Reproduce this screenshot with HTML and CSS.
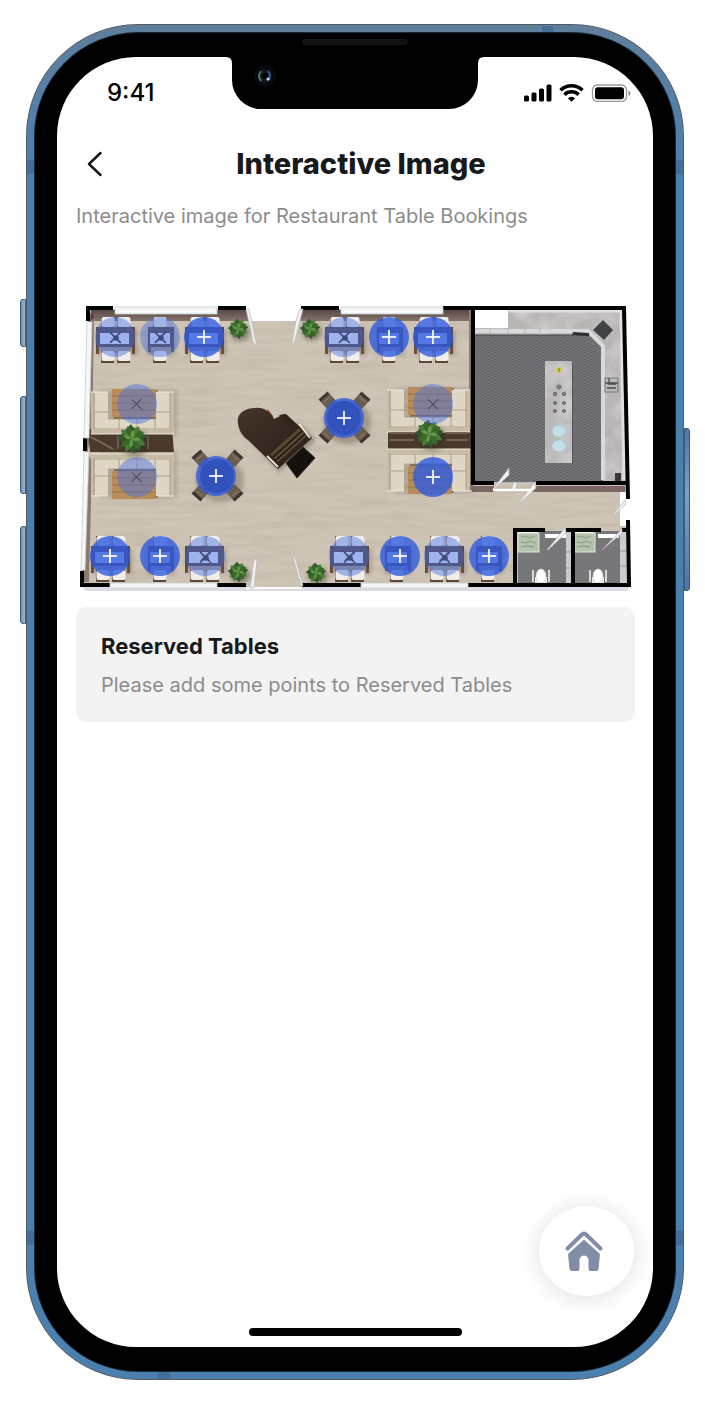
FILE: index.html
```html
<!DOCTYPE html>
<html lang="en">
<head>
<meta charset="utf-8">
<meta name="viewport" content="width=device-width, initial-scale=1">
<title>Interactive Image</title>
<link rel="stylesheet" href="styles.css">
</head>
<body>
<div class="phone">
  <span class="key key-mute"></span>
  <span class="key key-up"></span>
  <span class="key key-down"></span>
  <span class="key key-power"></span>
  <span class="band band-lt"></span>
  <span class="band band-lb"></span>
  <span class="band band-rt"></span>
  <span class="band band-rb"></span>
  <span class="band band-top"></span>
  <span class="band band-bottom"></span>
  <div class="bezel">
    <span class="speaker"></span>
    <div class="screen">
      <svg class="notch" viewBox="0 0 258 52" aria-hidden="true">
        <path d="M0 0h258q-6 0-6 6v17a29 29 0 0 1-29 29H35A29 29 0 0 1 6 23V6q0-6-6-6z" fill="#000"/>
        <circle cx="39" cy="19" r="11" fill="#060a0c"/>
        <circle cx="39" cy="19" r="7" fill="#10191f"/>
        <path d="M35 14q-4 5 0 10" stroke="#46736c" stroke-width="2" fill="none"/>
        <circle cx="39" cy="19" r="3" fill="#000"/>
        <path d="M42 14q3 4 1 9" stroke="#2f56a8" stroke-width="2" fill="none"/>
        <circle cx="42" cy="22" r="1.6" fill="#bcd4f4"/>
      </svg>
      <div class="status">
        <time>9:41</time>
        <svg class="status-icons" viewBox="0 0 107 18" aria-hidden="true">
          <rect x="0" y="11.500" width="5" height="6" rx="1.500"/>
          <rect x="7.500" y="8.500" width="5" height="9" rx="1.500"/>
          <rect x="15" y="4.500" width="5" height="13" rx="1.500"/>
          <rect x="22.500" y="0.500" width="5" height="17" rx="1.500"/>
          <g fill="none" stroke="#000" stroke-width="3.500">
            <path d="M36.500 6.200a16 16 0 0 1 22 0"/>
            <path d="M40.400 10.700a10.300 10.300 0 0 1 14.200 0"/>
          </g>
          <path d="M47.500 17.800l-3.600-3.500a5 5 0 0 1 7.200 0z"/>
          <rect x="68.500" y="1" width="34" height="16.500" rx="5" fill="none" stroke="#000" stroke-opacity=".4" stroke-width="1.300"/>
          <rect x="71" y="3.300" width="29" height="12" rx="2.800"/>
          <path d="M104.500 6.500q2 .8 2 2.800t-2 2.800z" fill-opacity=".45"/>
        </svg>
      </div>

      <header class="titlebar">
        <button class="back" type="button" aria-label="Back">
          <svg viewBox="0 0 16 26" aria-hidden="true"><path d="M13.500 2L2 13l11.500 11"/></svg>
        </button>
        <h1>Interactive Image</h1>
      </header>

      <main>
        <p class="lead">Interactive image for Restaurant Table Bookings</p>

        <div class="plan">
          <svg class="plan-art" viewBox="76 300 559 295" role="img" aria-label="Restaurant floor plan">
            <defs>
              <filter id="grain" x="0" y="0" width="100%" height="100%">
                <feTurbulence type="fractalNoise" baseFrequency=".018 .14" numOctaves="3" seed="4"/>
                <feColorMatrix values="0 0 0 0 .48  0 0 0 0 .42  0 0 0 0 .34  .9 0 0 0 -.34"/>
              </filter>
              <filter id="marble" x="0" y="0" width="100%" height="100%">
                <feTurbulence type="fractalNoise" baseFrequency=".05" numOctaves="3" seed="9"/>
                <feColorMatrix values="0 0 0 0 1  0 0 0 0 1  0 0 0 0 1  1.600 0 0 0 -.55"/>
              </filter>
              <filter id="soft" x="-20%" y="-20%" width="140%" height="140%"><feGaussianBlur stdDeviation="2"/></filter>
              <linearGradient id="wall" x1="0" y1="0" x2="0" y2="1">
                <stop offset="0" stop-color="#5b4847"/><stop offset="1" stop-color="#85746a"/>
              </linearGradient>
              <linearGradient id="lid" x1="0" y1="0" x2="1" y2="1">
                <stop offset="0" stop-color="#45342a"/><stop offset="1" stop-color="#281c16"/>
              </linearGradient>
              <pattern id="tiles" width="6" height="6" patternUnits="userSpaceOnUse">
                <rect width="6" height="6" fill="#67686a"/>
                <path d="M0 3l3-3 3 3M0 6l3-3 3 3" stroke="#7d7e81" stroke-width=".8" fill="none"/>
              </pattern>
              <clipPath id="floorclip"><path d="M88 309H246L251 321H299L302 309H625L629 587H81z"/></clipPath>

              <g id="chair">
                <path d="M-7-6h13v12h-13z" fill="#6a5141"/>
                <rect x="-6.500" y="-6" width="13" height="10" rx="2" fill="#f1edea"/>
                <path d="M-6 5h12" stroke="#5b4334" stroke-width="1.500"/>
              </g>
              <g id="table2">
                <rect x="-17" y="-7" width="39" height="25" fill="#4b382d" opacity=".3" filter="url(#soft)"/>
                <use href="#chair" x="-7" y="-14"/><use href="#chair" x="9" y="-14"/>
                <use href="#chair" x="-7" y="20"/><use href="#chair" x="9" y="20"/>
                <path d="M-19-9h39v26h-3V9h-33v8h-3z" fill="#6b4e3b"/>
                <rect x="-19" y="-10" width="39" height="20" fill="#594441"/>
                <rect x="-15" y="-4" width="29" height="11" fill="#e9edf8"/>
              </g>
              <g id="table1">
                <rect x="-12" y="-7" width="27" height="25" fill="#4b382d" opacity=".3" filter="url(#soft)"/>
                <use href="#chair" y="-14"/><use href="#chair" y="20"/>
                <path d="M-12-9h26v24h-3V9h-20v6h-3z" fill="#6b4e3b"/>
                <rect x="-12" y="-10" width="26" height="20" fill="#594441"/>
                <rect x="-10" y="-4" width="20" height="11" fill="#dfe5f5"/>
              </g>
              <g id="flowers">
                <path d="M-5-5L6 6M6-5L-5 6" stroke="#2b2632" stroke-width="1.300"/>
                <circle cx="1" cy="1" r="2.800" fill="#293344"/>
                <path d="M-4-4l2 3M4-4l-2 3" stroke="#9a4056" stroke-width="1.200"/>
              </g>
              <g id="seat">
                <rect x="-6" y="-6" width="12" height="12" rx="2" fill="#6a5c50"/>
                <path d="M-6-6h12" stroke="#40352d" stroke-width="3"/>
                <path d="M-4-2h8" stroke="#8b7d6f"/>
              </g>
              <g id="round">
                <ellipse cx="3" cy="4" rx="24" ry="22" fill="#4a3b2e" opacity=".3" filter="url(#soft)"/>
                <use href="#seat" transform="translate(-16 -17) rotate(-42)"/>
                <use href="#seat" transform="translate(17 -17) rotate(42)"/>
                <use href="#seat" transform="translate(-16 16) rotate(222)"/>
                <use href="#seat" transform="translate(17 16) rotate(138)"/>
                <circle r="17" fill="#3c3034"/>
              </g>
              <g id="booth">
                <rect x="-38" y="-18" width="78" height="46" fill="#4b3a2b" opacity=".2" filter="url(#soft)"/>
                <rect x="-23" y="-18" width="44" height="30" fill="#4d3523" opacity=".55"/>
                <rect x="-25" y="-19" width="44" height="28" fill="#b98d59"/>
                <path d="M-25-12h44M-25-5h44M-25 2h44" stroke="#9b7142" stroke-width="1"/>
                <path d="M-46-16h17v27h48v-27h18v42h-83z" fill="#dfd6c5"/>
                <path d="M-46-16h4v38h75v-38h4v42h-83z" fill="#c8bca7"/>
                <path d="M-43-15v36h76v-36M-28 11h47M-18 11v10M0 11v10M18 11v10M-42 4h14M19 4h14" fill="none" stroke="#a1947f" stroke-width=".8"/>
                <path d="M-46-16h17M20-16h17M-46 26h83" stroke="#f0e9dc" stroke-width="1.200"/>
              </g>
              <g id="leafs">
                <path d="M0 0C-4-5-5-9-1-12 3-8 3-4 0 0zM0 0C5-5 9-5 12-2 8 2 4 2 0 0zM0 0C-5-4-9-4-12-1-8 3-4 2 0 0zM0 0C-3 5-2 9 2 12 4 7 3 3 0 0z"/>
              </g>
              <g id="plant">
                <ellipse cx="2" cy="3" rx="10" ry="9" fill="#2d2c1d" opacity=".4" filter="url(#soft)"/>
                <circle r="8" fill="#335526"/>
                <use href="#leafs" fill="#31592a" transform="scale(.85)"/>
                <use href="#leafs" fill="#477b35" transform="rotate(35) scale(.82)"/>
                <use href="#leafs" fill="#396829" transform="rotate(65) scale(.78)"/>
                <use href="#leafs" fill="#67994b" transform="rotate(15) scale(.5)"/>
              </g>
              <g id="toilet">
                <path d="M-8-3v12M8-3v12" stroke="#f3f3f5" stroke-width="1.600"/>
                <rect x="-6" y="4" width="12" height="8" fill="#e8e8ec"/>
                <ellipse cy="3" rx="5" ry="7" fill="#fff" stroke="#c8c9cd" stroke-width=".6"/>
              </g>
              <g id="shower">
                <rect width="21" height="19" fill="#b5c2ad" stroke="#dfe5da"/>
                <path d="M3 4l4-1 4 2 6-2M3 9l5 1 4-2 6 2M3 14l6-1 8 1" stroke="#879b7f" fill="none"/>
                <path d="M0-1h20" stroke="#eff2ee" stroke-width="2"/>
              </g>
            </defs>

            <path d="M80 584H630L627 591H86z" fill="#dcdce6"/>
            <g clip-path="url(#floorclip)">
              <rect x="78" y="305" width="554" height="284" fill="#cfc5b6"/>
              <rect x="78" y="305" width="554" height="284" filter="url(#grain)"/>
              <path d="M91 310H246L251 321H92zM302 310H472V321H299z" fill="url(#wall)"/>
              <path d="M89 310l5 10-2 118-4 10v4l4 10-3 120h-8z" fill="#897a71"/>
              <path d="M469 310h4v180h-4z" fill="#8a7b70"/>
            </g>

            <!-- lounge dividers and booths -->
            <path d="M88 429H172L174 452H90z" fill="#4b3a2d"/>
            <use href="#booth" x="137" y="408"/>
            <use href="#booth" transform="translate(137 480) scale(1 -1)"/>
            <path d="M388 429H471V449H388z" fill="#4b3a2d"/>
            <use href="#booth" x="433" y="406"/>
            <use href="#booth" transform="translate(433 475) scale(1 -1)"/>
            <path d="M91 436h23v14H92zM150 436h21v14h-21zM390 432h24v15h-24zM446 432h22v15h-22z" fill="#4b3a2c"/>
            <path d="M91 437l22 12M118 436v13M148 436v13M390 440h24M446 440h22M390 433h24M446 433h22" stroke="#80705e" stroke-width="1.500"/>
            <use href="#plant" transform="translate(132 439) scale(1.450)"/>
            <use href="#plant" transform="translate(429 434) scale(1.400)"/>

            <!-- dining tables -->
            <use href="#table2" x="115" y="337"/><use href="#table1" x="160" y="337"/><use href="#table2" x="204" y="337"/>
            <use href="#table2" x="344" y="337"/><use href="#table1" x="389" y="337"/><use href="#table2" x="433" y="337"/>
            <use href="#table2" x="110" y="556"/><use href="#table1" x="160" y="556"/><use href="#table2" x="204" y="556"/>
            <use href="#table2" x="349" y="556"/><use href="#table1" x="397" y="556"/><use href="#table2" x="444" y="556"/><use href="#table1" x="488" y="556"/>
            <use href="#flowers" x="115" y="337"/><use href="#flowers" x="160" y="337"/><use href="#flowers" x="344" y="337"/>
            <use href="#flowers" x="205" y="557"/><use href="#flowers" x="349" y="557"/><use href="#flowers" x="444" y="557"/>
            <use href="#round" x="344" y="418"/><use href="#round" x="217" y="476"/>

            <!-- grand piano -->
            <path d="M241 430L279 472 316 440 300 424z" fill="#3a2c20" opacity=".35" filter="url(#soft)"/>
            <path d="M267 409q8 7 6 11h14l7 4-5 5-22-6z" fill="#a04524"/>
            <path d="M238 424c-2-9 5-16 17-16 9-1 15 4 19 11l10-5 28 24-35 30-29-28c-6-4-9-10-10-16z" fill="url(#lid)"/>
            <path d="M279 415l7-1 26 24-34 31-13-13 28-26z" fill="#31251d"/>
            <path d="M270 454l29-26 8 8-29 26z" fill="#594733"/>
            <path d="M273 457l29-26M276 460l29-26" stroke="#1b1511" stroke-width="1.500"/>
            <path d="M267 456l11 11M299 424l11 14" stroke="#efe6d5" stroke-width="1.800"/>
            <path d="M286 463l17-16 12 11-18 20z" fill="#15110f" stroke="#302720"/>

            <!-- kitchen -->
            <path d="M474 309H623L627 483H474z" fill="#b9b5b4"/>
            <path d="M474 309H623L627 483H474z" filter="url(#marble)" opacity=".4"/>
            <path d="M474 335H591L602 347V482H474z" fill="url(#tiles)"/>
            <path d="M474 335h117l11 12v135" fill="none" stroke="#454548" stroke-width="1"/>
            <path d="M474 331H588L603 346V480" fill="none" stroke="#d9d8dc" stroke-width="4"/>
            <path d="M509 311H621L624 480" fill="none" stroke="#e3dfe1" stroke-width="3"/>
            <rect x="474" y="310" width="34" height="18" fill="#fff"/>
            <path d="M490 328v7M508 328v7M525 328v7M540 328v7" stroke="#aaa" stroke-width=".7"/>
            <path d="M573 332l16 1v3l-17-1z" fill="#303033"/>
            <path d="M593 330l10-10 10 10-9 10z" fill="#414245"/>
            <rect x="605" y="378" width="13" height="14" fill="#b9b9bb" stroke="#77787c"/>
            <path d="M605 383h13M609 378v6h7M607 388h9" stroke="#4c4d51" stroke-width="1.300" fill="none"/>
            <rect x="615" y="473" width="6" height="8" fill="#38383b"/>
            <path d="M547 363h26v100h-26z" fill="#333" opacity=".45"/>
            <rect x="545" y="361" width="27" height="102" rx="1" fill="#bbb8b9"/>
            <rect x="545" y="361" width="27" height="102" filter="url(#marble)" opacity=".4"/>
            <circle cx="559" cy="370" r="3" fill="#d0cf43"/><path d="M559 368v4" stroke="#6e6b1d"/>
            <g fill="#918b88" stroke="#595452" stroke-width=".8">
              <circle cx="559" cy="387" r="2"/><circle cx="555" cy="394" r="1.700"/><circle cx="564" cy="394" r="1.700"/>
              <circle cx="555" cy="403" r="1.500"/><circle cx="564" cy="403" r="1.500"/><circle cx="555" cy="411" r="1.500"/><circle cx="564" cy="411" r="1.500"/>
            </g>
            <ellipse cx="559" cy="431" rx="7" ry="6" fill="#c0dfe6" stroke="#a2c3ca" stroke-width=".7"/>
            <ellipse cx="559" cy="446" rx="7" ry="6" fill="#c0dfe6" stroke="#a2c3ca" stroke-width=".7"/>
            <path d="M472 486H625V492H472z" fill="#7a6761"/>
            <path d="M494 486h41l-6 7h-35z" fill="#c7bcac"/>

            <!-- washrooms -->
            <path d="M518 531H628V584H518z" fill="#777779"/>
            <path d="M566 531h5v52h-5zM620 531h7v52h-7z" fill="#c9cbd0"/>
            <path d="M566 552h5M566 568h5M620 551h7M620 566h7" stroke="#999"/>
            <path d="M545 536h21M598 536h21" stroke="#fff" stroke-width="4"/>
            <use href="#shower" x="518" y="533"/><use href="#shower" x="574" y="533"/>
            <use href="#toilet" x="541" y="573"/><use href="#toilet" x="598" y="573"/>
            <path d="M620 492h8v34h-8z" fill="#fff"/>

            <!-- outer walls -->
            <g fill="none" stroke="#020202" stroke-width="4">
              <path d="M88 321V308H113M218 308H246M301 308H339M443 308H624L628 499"/>
              <path d="M473 308V483H494M536 483H627M85 438v13"/>
              <path d="M82 571V585H110M217 585H246M302 585H361M468 585H629L628 520M515 585V530H545M566 530H601M573 530V585M622 530h6"/>
            </g>
            <path d="M92 310L90 321 94 318z" fill="#4f403b"/>

            <!-- glazing -->
            <g fill="#f4f6f7" stroke="#c8ced0" stroke-width=".8">
              <path d="M115 307h102v7h-102zM341 307h102v7h-102z"/>
              <path d="M87 322h5l-3 116h-5zM84 452h5l-4 118h-4z"/>
              <path d="M110 583h107v5h-107zM361 583h107v5h-107z"/>
            </g>
            <path d="M118 311h96M344 311h96M246 588h56" stroke="#fff" stroke-width="2"/>

            <!-- doors -->
            <g fill="#f1f1f3" stroke="#b6b6ba" stroke-width=".7">
              <path d="M246 309h3l8 38-4-5z"/><path d="M296 320l4-11h3l-9 35-2-1z"/>
              <path d="M250 588l4-29h3l-3 29z"/><path d="M293 557h2l8 29h-2z"/>
              <path d="M493 489l16-21v7l-16 15z"/><path d="M511 491l3-9 3 1-2 8z"/>
              <path d="M518 504l17-22 1 6-18 17z"/>
              <path d="M609 520l16-20 1 4-17 16z"/>
              <path d="M547 550l18-22 1 5-18 17z"/><path d="M602 550l20-21v4l-20 17z"/>
            </g>
            <path d="M493 490h38" stroke="#fff" stroke-width="2.500"/>

            <use href="#plant" transform="translate(238 329)"/><use href="#plant" transform="translate(310 329)"/>
            <use href="#plant" transform="translate(238 572)"/><use href="#plant" transform="translate(316 573)"/>
          </svg>

          <button class="pin taken" type="button" aria-label="Table 1, reserved" style="--x:39;--y:37"></button>
          <button class="pin taken" type="button" aria-label="Table 2, reserved" style="--x:84;--y:37"></button>
          <button class="pin" type="button" aria-label="Add table 3" style="--x:128;--y:37"></button>
          <button class="pin taken" type="button" aria-label="Table 4, reserved" style="--x:268;--y:37"></button>
          <button class="pin" type="button" aria-label="Add table 5" style="--x:313;--y:37"></button>
          <button class="pin" type="button" aria-label="Add table 6" style="--x:357;--y:37"></button>
          <button class="pin taken" type="button" aria-label="Booth 7, reserved" style="--x:61;--y:104"></button>
          <button class="pin" type="button" aria-label="Add table 8" style="--x:268;--y:118"></button>
          <button class="pin taken" type="button" aria-label="Booth 9, reserved" style="--x:357;--y:104"></button>
          <button class="pin taken" type="button" aria-label="Booth 10, reserved" style="--x:61;--y:177"></button>
          <button class="pin" type="button" aria-label="Add table 11" style="--x:140;--y:176"></button>
          <button class="pin" type="button" aria-label="Add booth 12" style="--x:357;--y:177"></button>
          <button class="pin" type="button" aria-label="Add table 13" style="--x:34;--y:256"></button>
          <button class="pin" type="button" aria-label="Add table 14" style="--x:84;--y:256"></button>
          <button class="pin taken" type="button" aria-label="Table 15, reserved" style="--x:129;--y:256"></button>
          <button class="pin taken" type="button" aria-label="Table 16, reserved" style="--x:273;--y:256"></button>
          <button class="pin" type="button" aria-label="Add table 17" style="--x:324;--y:256"></button>
          <button class="pin taken" type="button" aria-label="Table 18, reserved" style="--x:368;--y:256"></button>
          <button class="pin" type="button" aria-label="Add table 19" style="--x:413;--y:256"></button>
        </div>

        <section class="card">
          <h2>Reserved Tables</h2>
          <p>Please add some points to Reserved Tables</p>
        </section>
      </main>

      <footer>
        <button class="home" type="button" aria-label="Home">
          <svg viewBox="0 0 40 42" aria-hidden="true">
            <path d="M3.500 18.500L18 4.500q2-1.800 4 0l14.500 14" fill="none" stroke="#818da6" stroke-width="4" stroke-linecap="round"/>
            <path d="M20 9.500L36 24l-1.500 15q-.2 2-2 2h-6q-2 0-2-2v-9q0-4-4.500-4.500-4.500.5-4.500 4.500v9q0 2-2 2H7.700q-2 0-2.200-2L4 24z" fill="#818da6"/>
          </svg>
        </button>
        <span class="indicator"></span>
      </footer>
    </div>
  </div>
</div>
</body>
</html>
```
FILE: styles.css
```css
* { box-sizing: border-box; }

body {
  margin: 0;
  padding: 24px 21px 30px 26px;
  background: #fff;
  color: #18191b;
  font-family: Inter, "Liberation Sans", sans-serif;
}

h1, h2, p { margin: 0; }

button {
  padding: 0;
  border: 0;
  background: none;
  font: inherit;
  cursor: pointer;
}

/* Device shell */
.phone {
  position: relative;
  display: flex;
  min-height: calc(100vh - 54px);
  padding: 8px;
  border: 1px solid #555a5e;
  border-radius: 112px;
  background: linear-gradient(#5f7f9b, #4b80ae 140px);
}

.bezel {
  position: relative;
  display: flex;
  flex: 1;
  min-width: 0;
  padding: 24px 22px;
  border-radius: 103px;
  background: #000;
  box-shadow: 0 0 0 1px #16283a;
}

.screen {
  position: relative;
  display: flex;
  flex: 1;
  flex-direction: column;
  min-width: 0;
  overflow: hidden;
  border-radius: 79px;
  background: #fff;
}

.key {
  position: absolute;
  left: -7px;
  width: 6px;
  border: 1px solid #3e5878;
  border-radius: 3px 0 0 3px;
  background: linear-gradient(90deg, #6f93b8, #9db9d6);
}

.key-mute { top: 274px; height: 48px; }
.key-up { top: 371px; height: 98px; }
.key-down { top: 501px; height: 98px; }

.key-power {
  top: 403px;
  right: -7px;
  left: auto;
  height: 163px;
  border-radius: 0 3px 3px 0;
  background: linear-gradient(#4f75a3, #7ba1cb 40%, #4f75a3);
}

.band { position: absolute; width: 8px; height: 14px; background: #426e99; }
.band-lt { top: 135px; left: 0; }
.band-rt { top: 135px; right: 0; }
.band-lb { bottom: 134px; left: 0; }
.band-rb { bottom: 134px; right: 0; }
.band-top { top: 1px; right: 130px; width: 11px; height: 7px; }
.band-bottom { bottom: 0; left: 131px; width: 12px; height: 7px; }

.speaker {
  position: absolute;
  top: 6px;
  left: 50%;
  width: 105px;
  height: 6px;
  border: 1px solid #181818;
  border-radius: 3px;
  background: #111;
  transform: translateX(-50%);
}

.notch {
  position: absolute;
  top: 0;
  left: 50%;
  width: 258px;
  height: 52px;
  transform: translateX(-50%);
}

/* Status bar */
.status {
  display: flex;
  align-items: center;
  justify-content: space-between;
  padding: 20px 22px 0 50px;
}

.status time {
  color: #000;
  font-size: 24px;
  font-weight: 500;
  line-height: 32px;
}

.status-icons { width: 107px; height: 18px; }

/* Title bar */
.titlebar {
  display: grid;
  grid-template-columns: 40px 1fr 40px;
  align-items: center;
  padding: 35px 12px 0 24px;
}

.back {
  display: flex;
  width: 40px;
  height: 40px;
  align-items: center;
  padding-left: 6px;
}

.back svg {
  width: 16px;
  height: 26px;
  fill: none;
  stroke: #18191b;
  stroke-width: 2.5px;
  stroke-linecap: round;
  stroke-linejoin: round;
}

h1 {
  font-size: 29px;
  font-weight: 800;
  line-height: 40px;
  text-align: center;
  white-space: nowrap;
}

main { padding: 17px 18px 0 19px; }

.lead {
  color: #8c8c8c;
  font-size: 20px;
  line-height: 30px;
}

/* Floor plan */
.plan { position: relative; margin-top: 69px; }
.plan-art { display: block; width: 100%; height: auto; }

.pin {
  position: absolute;
  top: calc(var(--y) / 295 * 100%);
  left: calc(var(--x) / 559 * 100%);
  display: grid;
  width: calc(40 / 559 * 100%);
  aspect-ratio: 1;
  border-radius: 50%;
  background: rgba(46, 91, 222, 0.8);
  transform: translate(-50%, -50%);
}

.pin::before,
.pin::after {
  grid-area: 1 / 1;
  place-self: center;
  background: rgba(255, 255, 255, 0.85);
  content: "";
}

.pin::before { width: 14px; height: 2px; }
.pin::after { width: 2px; height: 14px; }

.pin.taken {
  background: rgba(70, 112, 226, 0.46);
}

.pin.taken::before,
.pin.taken::after {
  background: #474d6b;
  transform: rotate(45deg);
}

.pin.taken::before { height: 1px; }
.pin.taken::after { width: 1px; }

.card {
  margin-top: 12px;
  padding: 23px 25px 22px;
  border-radius: 10px;
  background: #f3f3f3;
}

.card h2 {
  font-size: 22px;
  font-weight: 700;
  line-height: 32px;
}

.card p {
  margin-top: 8px;
  color: #8c8c8c;
  font-size: 20px;
  line-height: 30px;
}

/* Bottom area */
footer {
  display: flex;
  flex-direction: column;
  align-items: center;
  gap: 32px;
  margin-top: auto;
  padding: 32px 19px 11px;
}

.home {
  display: grid;
  width: 95px;
  height: 90px;
  align-self: flex-end;
  place-items: center;
  border-radius: 50%;
  background: #fff;
  box-shadow: 0 2px 24px rgba(0, 0, 0, 0.13);
}

.home svg { width: 40px; height: 42px; margin-right: 6px; }

.indicator {
  width: 213px;
  height: 8px;
  border-radius: 4px;
  background: #000;
}
```
